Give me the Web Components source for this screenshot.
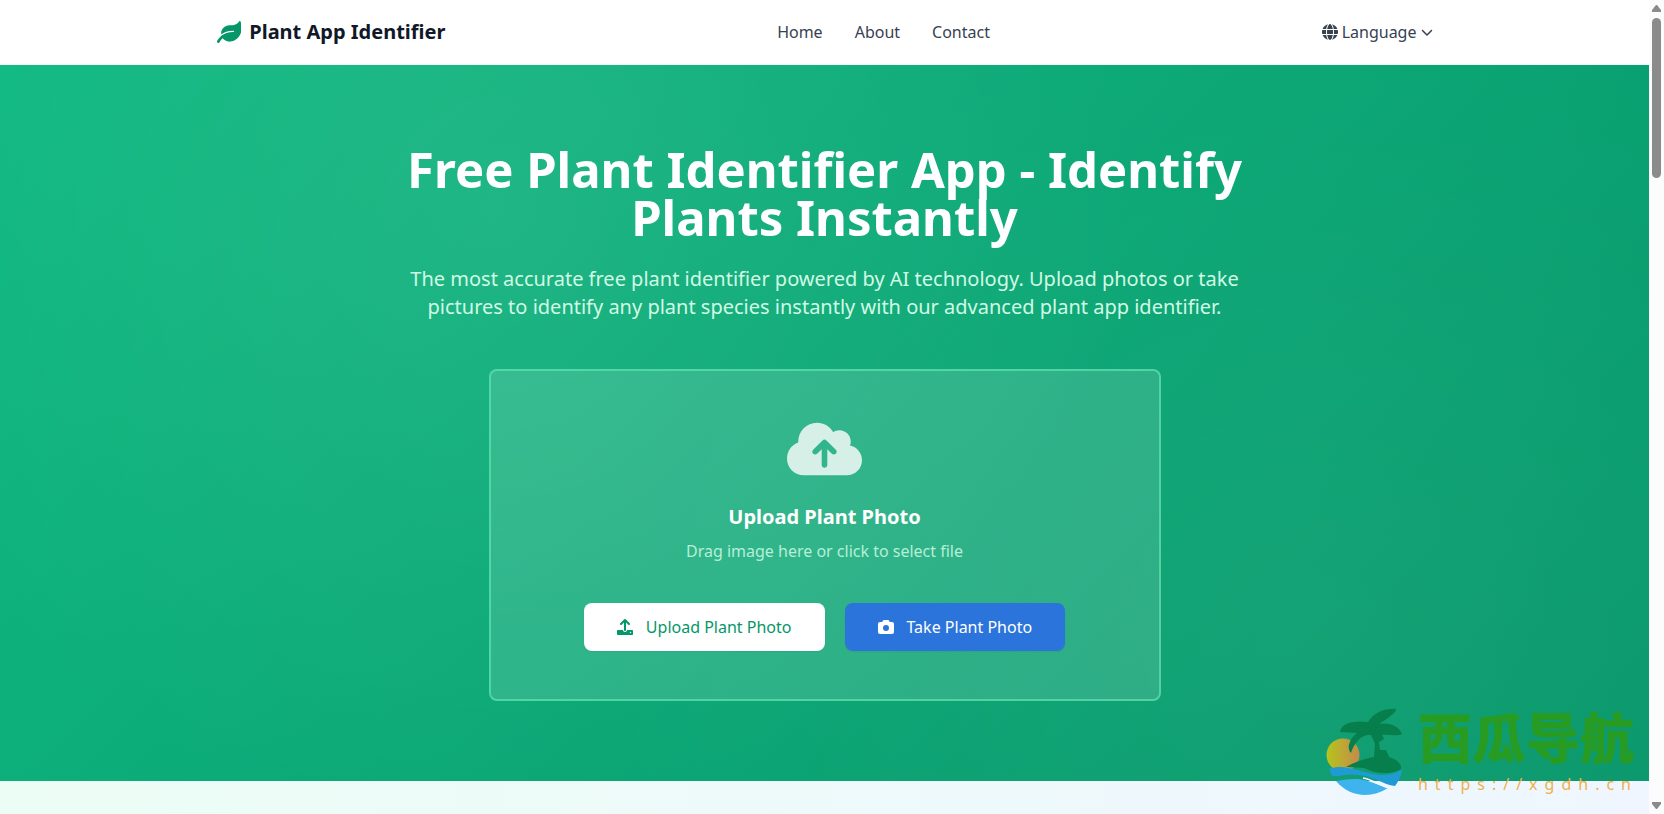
<!DOCTYPE html>
<html lang="en">
<head>
<meta charset="utf-8">
<meta name="viewport" content="width=device-width, initial-scale=1">
<title>Plant App Identifier</title>
<style>
  html, body { margin: 0; height: 100%; }
  body { overflow: hidden; background: #fff; font: 16px/24px "Noto Sans", "Open Sans", sans-serif; color: #374151; }
</style>
</head>
<body>
<plant-page>
  <site-header slot="header"></site-header>
  <hero-section>
    <span slot="title">Free Plant Identifier App - Identify Plants Instantly</span>
    <span slot="lead">The most accurate free plant identifier powered by AI technology. Upload photos or take pictures to identify any plant species instantly with our advanced plant app identifier.</span>
    <upload-card>
      <span slot="title">Upload Plant Photo</span>
      <span slot="hint">Drag image here or click to select file</span>
      <action-button icon="upload">Upload Plant Photo</action-button>
      <action-button icon="camera" kind="primary">Take Plant Photo</action-button>
    </upload-card>
  </hero-section>
  <site-watermark slot="overlay"></site-watermark>
  <scroll-rail slot="rail"></scroll-rail>
</plant-page>
<script>
const ICONS = {
  leaf: [576, 'M546.2 9.7c-5.6-12.5-21.6-13-28.3-1.2C486.9 62.4 431.4 96 368 96h-80C182 96 96 182 96 288c0 7 .8 13.7 1.5 20.5C161.3 262.8 253.4 224 384 224c8.8 0 16 7.2 16 16s-7.2 16-16 16C132.6 256 26 410.1 2.4 468c-6.6 16.3 1.2 34.9 17.5 41.6 16.4 6.8 35-1.1 41.8-17.3 1.5-3.6 20.9-47.9 71.9-90.6 32.4 43.9 94 85.8 174.9 77.2C465.5 467.5 576 326.7 576 154.3c0-50.2-10.8-102.2-29.8-144.6z'],
  globe: [512, 'M352 256c0 22.2-1.2 43.6-3.3 64H163.3c-2.2-20.4-3.3-41.8-3.3-64s1.2-43.6 3.3-64H348.7c2.2 20.4 3.3 41.8 3.3 64zm28.8-64H503.9c5.3 20.5 8.1 41.9 8.1 64s-2.8 43.5-8.1 64H380.8c2.1-20.6 3.2-42 3.2-64s-1.1-43.4-3.2-64zm112.6-32H376.7c-10-63.9-29.8-117.4-55.3-151.6c78.3 20.7 142 77.5 171.9 151.6zm-149.1 0H167.7c6.1-36.4 15.5-68.6 27-94.7c10.5-23.6 22.2-40.7 33.5-51.5C239.4 3.2 248.7 0 256 0s16.6 3.2 27.8 13.8c11.3 10.8 23 27.9 33.5 51.5c11.6 26 20.9 58.2 27 94.7zm-209 0H18.6C48.6 85.9 112.2 29.1 190.6 8.4C165.1 42.6 145.3 96.1 135.3 160zM8.1 192H131.2c-2.1 20.6-3.2 42-3.2 64s1.1 43.4 3.2 64H8.1C2.8 299.5 0 278.1 0 256s2.8-43.5 8.1-64zM194.7 446.6c-11.6-26-20.9-58.2-27-94.6H344.3c-6.1 36.4-15.5 68.6-27 94.6c-10.5 23.6-22.2 40.7-33.5 51.5C272.6 508.8 263.3 512 256 512s-16.6-3.2-27.8-13.8c-11.3-10.8-23-27.9-33.5-51.5zM135.3 352c10 63.9 29.8 117.4 55.3 151.6C112.2 482.9 48.6 426.1 18.6 352H135.3zm358.1 0c-30 74.1-93.6 130.9-171.9 151.6c25.5-34.2 45.2-87.7 55.3-151.6H493.4z'],
  chevron: [512, 'M233.4 406.6c12.5 12.5 32.8 12.5 45.3 0l192-192c12.5-12.5 12.5-32.8 0-45.3s-32.8-12.5-45.3 0L256 338.7 86.6 169.4c-12.5-12.5-32.8-12.5-45.3 0s-12.5 32.8 0 45.3l192 192z'],
  cloud: [640, 'M144 480C64.5 480 0 415.5 0 336c0-62.8 40.2-116.2 96.2-135.9c-.1-2.7-.2-5.4-.2-8.1c0-88.4 71.6-160 160-160c59.3 0 111 32.2 138.7 80.2C409.9 102 428.3 96 448 96c53 0 96 43 96 96c0 12.2-2.3 23.8-6.4 34.6C596 238.4 640 290.1 640 352c0 70.7-57.3 128-128 128H144zm79-217c-9.4 9.4-9.4 24.6 0 33.9s24.6 9.4 33.9 0l39-39V392c0 13.3 10.7 24 24 24s24-10.7 24-24V257.9l39 39c9.4 9.4 24.6 9.4 33.9 0s9.4-24.6 0-33.9l-80-80c-9.4-9.4-24.6-9.4-33.9 0l-80 80z'],
  upload: [512, 'M288 109.3V352c0 17.7-14.3 32-32 32s-32-14.3-32-32V109.3l-73.4 73.4c-12.5 12.5-32.8 12.5-45.3 0s-12.5-32.8 0-45.3l128-128c12.5-12.5 32.8-12.5 45.3 0l128 128c12.5 12.5 12.5 32.8 0 45.3s-32.8 12.5-45.3 0L288 109.3zM32 352H192c0 35.300 28.700 64 64 64s64-28.700 64-64H480c17.700 0 32 14.300 32 32v96c0 17.700-14.300 32-32 32H32c-17.700 0-32-14.300-32-32V384c0-17.700 14.300-32 32-32zM432 456a24 24 0 1 0 0-48 24 24 0 1 0 0 48z'],
  camera: [512, 'M149.1 64.8L138.7 96H64C28.7 96 0 124.7 0 160V416c0 35.3 28.7 64 64 64H448c35.3 0 64-28.7 64-64V160c0-35.3-28.7-64-64-64H373.3L362.9 64.8C356.4 45.2 338.1 32 317.4 32H194.6c-20.7 0-39 13.2-45.5 32.8zM256 192a96 96 0 1 1 0 192 96 96 0 1 1 0-192z']
};

const define = (name, render) => customElements.define(name, class extends HTMLElement {
  connectedCallback() {
    if (!this.shadowRoot) this.attachShadow({ mode: 'open' }).innerHTML = render(this);
  }
});

define('app-icon', el => {
  const [width, path] = ICONS[el.getAttribute('name')];
  return `<style>
    :host { display: block; flex: none; height: var(--icon-size, 16px); }
    svg { display: block; height: 100%; fill: currentColor; }
  </style>
  <svg viewBox="0 0 ${width} 512" aria-hidden="true"><path d="${path}"/></svg>`;
});

define('plant-page', () => `<style>
    :host { display: grid; grid-template-columns: minmax(0, 1fr) 15px; height: 100vh; }
    .view { overflow: hidden; }
    .next { height: 400px; background: linear-gradient(90deg, #ecfdf5, #eff6ff); }
  </style>
  <div class="view"><slot name="header"></slot><main><slot></slot><div class="next"></div></main></div>
  <slot name="rail"></slot>
  <slot name="overlay"></slot>`);

define('site-header', () => `<style>
    :host { display: block; background: #fff; border-bottom: 1px solid #f3f4f6; }
    .bar { box-sizing: border-box; max-width: 1280px; height: 64px; margin: 0 auto; padding: 0 32px;
      display: flex; align-items: center; justify-content: space-between; }
    a { color: inherit; text-decoration: none; }
    .brand { display: flex; align-items: center; gap: 8px; font-size: 20px; line-height: 28px; font-weight: 700; color: #111827; }
    .brand app-icon { --icon-size: 22px; color: #059669; }
    nav { display: flex; gap: 32px; }
    button { display: flex; align-items: center; gap: 4px; padding: 0; border: 0; background: none; font: inherit; color: inherit; cursor: pointer; }
    .chevron { --icon-size: 12px; }
  </style>
  <header class="bar">
    <a class="brand" href="#"><app-icon name="leaf"></app-icon><span>Plant App Identifier</span></a>
    <nav><a href="#home">Home</a><a href="#about">About</a><a href="#contact">Contact</a></nav>
    <button type="button"><app-icon name="globe"></app-icon><span>Language</span><app-icon class="chevron" name="chevron"></app-icon></button>
  </header>`);

define('hero-section', () => `<style>
    :host { display: block; padding: 80px 32px; color: #fff; text-align: center;
      background:
        radial-gradient(circle at 30% 20%, rgba(255,255,255,.08), transparent 50%),
        radial-gradient(circle at 80% 80%, rgba(255,255,255,.05), transparent 50%),
        linear-gradient(135deg, #10b981 0%, #059669 100%); }
    .copy { max-width: 896px; margin: 0 auto; }
    h1 { margin: 0 0 24px; font-size: 49px; line-height: 48px; font-weight: 700; }
    p { margin: 0 0 48px; font-size: 20px; line-height: 28px; color: #d1fae5; }
  </style>
  <div class="copy"><h1><slot name="title"></slot></h1><p><slot name="lead"></slot></p></div>
  <slot></slot>`);

define('upload-card', () => `<style>
    :host { display: block; box-sizing: border-box; max-width: 672px; margin: 0 auto; padding: 48px;
      border: 2px solid rgba(110,231,183,.7); border-radius: 8px; background: rgba(255,255,255,.13); background-clip: padding-box; }
    .cloud { --icon-size: 60px; width: 75px; margin: 0 auto 24px; color: rgba(255,255,255,.8); }
    h2 { margin: 0 0 8px; font-size: 20px; line-height: 28px; font-weight: 700; }
    p { margin: 0 0 40px; color: #b5efd7; }
    .actions { display: flex; flex-wrap: wrap; justify-content: center; gap: 20px; }
  </style>
  <app-icon class="cloud" name="cloud"></app-icon>
  <h2><slot name="title"></slot></h2>
  <p><slot name="hint"></slot></p>
  <div class="actions"><slot></slot></div>`);

define('action-button', el => `<style>
    :host { display: block; }
    button { display: flex; align-items: center; gap: 13px; padding: 12px 33px; border: 0; border-radius: 8px;
      font: inherit; background: #fff; color: #059669; cursor: pointer; box-shadow: 0 1px 2px rgba(0,0,0,.05); }
    :host([kind="primary"]) button { background: #2b74dc; color: #fff; }
  </style>
  <button type="button"><app-icon name="${el.getAttribute('icon')}"></app-icon><span><slot></slot></span></button>`);

define('site-watermark', () => `<style>
    :host { position: absolute; right: 26px; bottom: 18px; display: flex; align-items: flex-end; gap: 12px; }
    svg { display: block; width: 80px; height: 90px; }
    .text { display: flex; flex-direction: column; gap: 8px; }
    .name { font: 900 54px/56px "Noto Sans CJK SC", sans-serif; color: #289c22; }
    .url { font-size: 16px; line-height: 24px; letter-spacing: 7px; color: #f0b04c; }
  </style>
  <svg viewBox="0 0 80 90" aria-hidden="true">
    <defs><linearGradient id="sun"><stop offset="0" stop-color="#b5c51c"/><stop offset="1" stop-color="#c58a4c"/></linearGradient></defs>
    <circle cx="17" cy="49" r="16.500" fill="url(#sun)"/>
    <path fill="#067f4c" d="M20 61C29 56 40 52 48 51L49 38 45 29C36 28 29 35 25 47C20 42 24 32 31 27L14 26C15 18 26 14 42 16C48 7 58 2 70 3C70 7 66 8 62 12L53 18C63 16 73 20 76 28C70 31 64 28 56 29L58 33 53 36 54 44 60 44 63 51C70 53 76 58 75 63C62 70 48 67 38 62Z"/>
    <path fill="#1f9ad3" d="M3 63C18 57 34 66 48 68C60 71 69 67 76 64C75 71 72 76 69 80C57 79 48 70 33 69C22 67 14 71 6 70Z"/>
    <path fill="#3fb3ee" d="M10 75C23 73 33 72 42 75L62 82C45 93 23 91 10 75Z"/>
    <path fill="none" stroke="#eff6ff" stroke-width="1.500" d="M37 72C46 73 52 79 63 82"/>
  </svg>
  <div class="text"><span class="name" lang="zh-CN">西瓜导航</span><span class="url">https://xgdh.cn</span></div>`);

define('scroll-rail', () => `<style>
    :host { box-sizing: border-box; display: flex; flex-direction: column; align-items: center; padding: 5px 0; background: #fcfcfc; }
    svg { display: block; width: 9px; height: 7px; fill: #8b8b8b; }
    .track { flex: 1; padding: 6px 0; }
    .thumb { width: 9px; height: 160px; border-radius: 5px; background: #8b8b8b; }
  </style>
  <svg viewBox="0 0 9 7"><path d="M4 0h1l4 5v2H0V5z"/></svg>
  <div class="track"><div class="thumb"></div></div>
  <svg viewBox="0 0 9 7"><path d="M4 7h1l4-5V0H0v2z"/></svg>`);
</script>
</body>
</html>
